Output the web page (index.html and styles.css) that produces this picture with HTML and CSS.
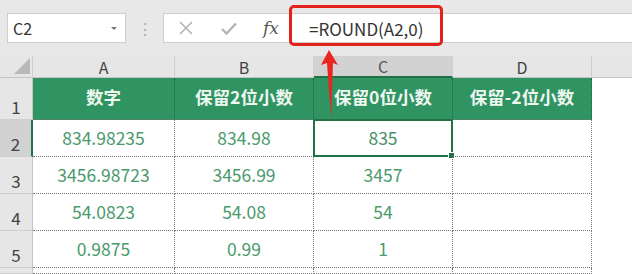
FILE: index.html
```html
<!DOCTYPE html>
<html>
<head>
    <title>ROUND</title>
    <link rel="stylesheet" href="styles.css">
</head>
<body>
    <div class="toolbar">
        <div class="namebox">
            <span>C2</span>
            <span class="caret"></span>
        </div>
        <div class="grip">⋮</div>
        <div class="fbar">
            <span class="tool">
                <svg width="14" height="14" viewBox="0 0 14 14"><path d="M1 1 L13 13 M13 1 L1 13" stroke="#b4b4b4" stroke-width="1.6" fill="none"/></svg>
            </span>
            <span class="tool">
                <svg width="16" height="13" viewBox="0 0 16 13"><path d="M1 7 L5.5 11.5 L15 1.5" stroke="#b4b4b4" stroke-width="2.4" fill="none"/></svg>
            </span>
            <span class="fx">fx</span>
            <span class="formula">=ROUND(A2,0)</span>
        </div>
    </div>

    <div class="sheet">
        <div class="corner"><span class="tri"></span></div>
        <div class="colhead">A</div>
        <div class="colhead">B</div>
        <div class="colhead active">C</div>
        <div class="colhead">D</div>
        <div class="colhead rest"></div>

        <div class="rowhead">1</div>
        <div class="cell title">数字</div>
        <div class="cell title">保留2位小数</div>
        <div class="cell title">保留0位小数</div>
        <div class="cell title">保留-2位小数</div>
        <div class="cell blank"></div>

        <div class="rowhead active">2</div>
        <div class="cell">834.98235</div>
        <div class="cell">834.98</div>
        <div class="cell selected">835<span class="handle"></span></div>
        <div class="cell"></div>
        <div class="cell blank"></div>

        <div class="rowhead">3</div>
        <div class="cell">3456.98723</div>
        <div class="cell">3456.99</div>
        <div class="cell">3457</div>
        <div class="cell"></div>
        <div class="cell blank"></div>

        <div class="rowhead">4</div>
        <div class="cell">54.0823</div>
        <div class="cell">54.08</div>
        <div class="cell">54</div>
        <div class="cell"></div>
        <div class="cell blank"></div>

        <div class="rowhead">5</div>
        <div class="cell">0.9875</div>
        <div class="cell">0.99</div>
        <div class="cell">1</div>
        <div class="cell"></div>
        <div class="cell blank"></div>

        <div class="rowhead"></div>
        <div class="cell"></div>
        <div class="cell"></div>
        <div class="cell"></div>
        <div class="cell"></div>
        <div class="cell blank"></div>
    </div>

    <!-- callout over the formula -->
    <div class="callout"></div>
    <svg class="arrow" width="24" height="80" viewBox="0 0 24 80">
        <polygon points="11,0 3,15 9,13 13,68 15,13 20,15" fill="#e8261f"/>
    </svg>
</body>
</html>
```

FILE: styles.css
```css
body {
    margin: 0;
    padding: 0;
    width: 632px;
    height: 274px;
    overflow: hidden;
    background-color: #ffffff;
    font-family: "Noto Sans CJK SC", "Noto Sans", sans-serif;
    position: relative;
}

.toolbar {
    height: 56px;
    background-color: #e8e8e8;
    display: flex;
    align-items: center;
    padding-left: 7px;
    box-sizing: border-box;
}

.namebox {
    width: 119px;
    height: 30px;
    background-color: #fff;
    border: 1px solid #cdcdcd;
    box-sizing: border-box;
    display: flex;
    align-items: center;
    justify-content: space-between;
    padding: 0 8px 0 5px;
    font-size: 16px;
    color: #333;
}

.caret {
    width: 0;
    height: 0;
    border-left: 3px solid transparent;
    border-right: 3px solid transparent;
    border-top: 3px solid #777;
}

.grip {
    width: 37px;
    text-align: center;
    color: #aaa;
    font-size: 16px;
}

.fbar {
    flex: 1;
    height: 30px;
    background-color: #fff;
    border: 1px solid #cdcdcd;
    border-right: none;
    box-sizing: border-box;
    display: flex;
    align-items: center;
}

.tool {
    width: 43px;
    display: flex;
    justify-content: center;
    align-items: center;
}

.fx {
    font-family: "DejaVu Serif", "Liberation Serif", serif;
    font-style: italic;
    font-size: 17px;
    color: #555;
    width: 30px;
    margin-left: 6px;
    text-align: center;
}

.formula {
    margin-left: 23px;
    font-size: 17px;
    color: #333;
}

.sheet {
    display: grid;
    grid-template-columns: 33px 142px 139px 139px 139px 1fr;
    grid-template-rows: 22px 42px 37px 37px 37px 37px 6px;
}

.corner {
    background-color: #e6e6e6;
    border-right: 1px solid #cfcfcf;
    border-bottom: 1px solid #c4c4c4;
    position: relative;
}

.tri {
    position: absolute;
    right: 2px;
    bottom: 3px;
    width: 0;
    height: 0;
    border-left: 16px solid transparent;
    border-bottom: 16px solid #b8b8b8;
}

.colhead {
    background-color: #e6e6e6;
    border-right: 1px solid #cfcfcf;
    border-bottom: 1px solid #c4c4c4;
    display: flex;
    align-items: center;
    justify-content: center;
    font-size: 16px;
    color: #444;
}

.colhead.active {
    background-color: #d2d2d2;
    border-bottom: 2px solid #217346;
    color: #555;
}

.colhead.rest {
    border-right: none;
}

.rowhead {
    background-color: #e6e6e6;
    border-right: 1px solid #c4c4c4;
    border-bottom: 1px solid #cfcfcf;
    display: flex;
    align-items: flex-end;
    justify-content: center;
    font-size: 17px;
    color: #444;
    box-sizing: border-box;
}

.rowhead.active {
    background-color: #d2d2d2;
    border-right: 2px solid #217346;
}

.cell {
    border-right: 1px dotted #777;
    border-bottom: 1px dotted #777;
    display: flex;
    align-items: center;
    justify-content: center;
    font-size: 17.5px;
    color: #4a9a6b;
    box-sizing: border-box;
    padding-bottom: 2px;
    position: relative;
}

.cell.title {
    background-color: #2f9462;
    color: #eef6f0;
    font-weight: bold;
    font-size: 17.5px;
    border-right: 1px dotted #1f5e3e;
    padding-bottom: 4px;
}

.cell.blank {
    border: none;
}

.cell.selected {
    border: 2px solid #217346;
    margin: -1px 0 0 -1px;
    color: #4a8f6a;
}

.handle {
    position: absolute;
    right: -4px;
    bottom: -4px;
    width: 5px;
    height: 5px;
    background-color: #217346;
    border: 1px solid #fff;
}

.callout {
    position: absolute;
    left: 289px;
    top: 5px;
    width: 154px;
    height: 41px;
    border: 3px solid #e3221c;
    border-radius: 5px;
    box-sizing: border-box;
}

.arrow {
    position: absolute;
    left: 318px;
    top: 50px;
}
```
